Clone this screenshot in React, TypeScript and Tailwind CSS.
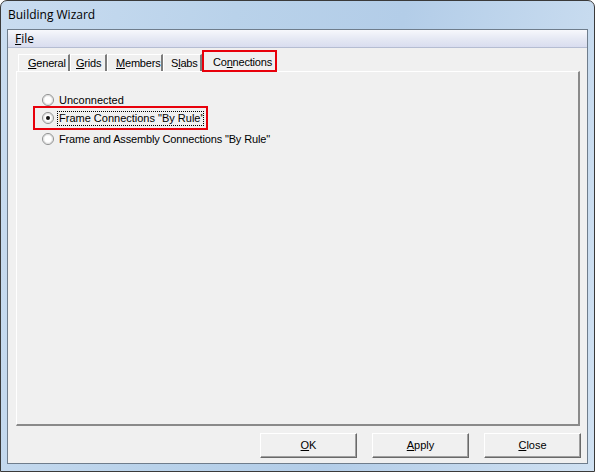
import React from "react";

const ui = { fontFamily: '"Liberation Sans", Arial, sans-serif' };
const seg = { fontFamily: '"Open Sans", "Noto Sans", sans-serif' };

function U({ children }: { children: React.ReactNode }) {
  return <span className="underline underline-offset-[1px] decoration-[1px]">{children}</span>;
}

function Radio({ checked }: { checked?: boolean }) {
  return (
    <svg width="12" height="12" viewBox="0 0 12 12" className="shrink-0">
      <circle cx="6" cy="6" r="5.5" fill="#f4f4f4" stroke="#8e8f8f" />
      <circle cx="6" cy="6" r="4.3" fill="#ffffff" stroke="#d6d6d6" strokeWidth="0.8" />
      {checked && <circle cx="6" cy="6" r="2" fill="#111" />}
    </svg>
  );
}

function Tab({
  children,
  w,
  pl,
  selected,
}: {
  children: React.ReactNode;
  w: string;
  pl: string;
  selected?: boolean;
}) {
  return (
    <div
      className={`${w} ${pl} flex items-center justify-start border-l border-t border-l-white border-t-white border-r-2 border-r-[#7c7c7c] ${
        selected ? "h-[21px] relative z-10 bg-[#f0f0f0]" : "h-[18px]"
      }`}
    >
      <span className="text-[11px] text-black leading-none whitespace-nowrap tracking-[-0.2px]" style={ui}>
        {children}
      </span>
    </div>
  );
}

function Btn({ children }: { children: React.ReactNode }) {
  return (
    <div className="w-[97px] h-[25px] flex items-center justify-center bg-[#f0f0f0] border border-t-white border-l-white border-r-[#696969] border-b-[#696969] shadow-[inset_-1px_-1px_0_#a0a0a0]">
      <span className="text-[11px] text-black" style={ui}>
        {children}
      </span>
    </div>
  );
}

export default function App() {
  return (
    <div className="w-[595px] h-[472px] bg-white">
      <div className="w-[595px] h-[472px] border border-[#3a3a3a] rounded-t-[7px] bg-[linear-gradient(100deg,#c9dcf0_0%,#b9d2ea_35%,#b3cde8_60%,#d0e1f2_100%)] flex flex-col">
        {/* caption */}
        <div className="h-[28px] flex items-center pl-[7px]">
          <span className="text-[12px] text-black" style={seg}>
            Building Wizard
          </span>
        </div>
        {/* client area */}
        <div className="mx-[6px] h-[435px] border border-[#6f7d8c] bg-[#f0f0f0] flex flex-col">
          <div className="h-[18px] bg-[linear-gradient(#f7f8fc,#e6e9f4_50%,#d9ddef)] border-b border-[#b5bdd2] flex items-center pl-[7px]">
            <span className="text-[12px] text-black leading-none" style={seg}>
              <U>F</U>ile
            </span>
          </div>
          {/* tab strip */}
          <div className="flex items-end pl-[10px] mt-[3px] h-[21px]">
            <Tab w="w-[52px]" pl="pl-[9px]">
              <U>G</U>eneral
            </Tab>
            <Tab w="w-[37px]" pl="pl-[5px]">
              <U>G</U>rids
            </Tab>
            <Tab w="w-[56px]" pl="pl-[8px]">
              <U>M</U>embers
            </Tab>
            <Tab w="w-[39px]" pl="pl-[7px]">
              S<U>l</U>abs
            </Tab>
            <div className="relative">
              <Tab w="w-[75px]" pl="pl-[10px]" selected>
                Co<U>n</U>nections
              </Tab>
              <div className="absolute left-0 top-[-1px] w-[75px] h-[22px] border-2 border-[#e8000b] z-20" />
            </div>
          </div>
          {/* tab page */}
          <div className="ml-[8px] mr-[7px] -mt-[1px] h-[355px] border-l border-t border-white border-r-2 border-b-2 border-r-[#8a8a8a] border-b-[#8a8a8a] flex flex-col pl-[25px] pt-[20px]">
            <div className="flex items-center gap-[5px] h-[16px]">
              <Radio />
              <span className="text-[11px] text-black" style={ui}>
                Unconnected
              </span>
            </div>
            <div className="relative flex items-center gap-[5px] h-[16px] mt-[2px]">
              <Radio checked />
              <span
                className="text-[11px] text-black leading-[13px] outline outline-1 outline-dotted outline-black px-[1px] -ml-[1px] w-[145px] overflow-hidden whitespace-nowrap"
                style={ui}
              >
                Frame Connections "By Rule"
              </span>
              <div className="absolute left-[-9px] top-[-4px] w-[175px] h-[24px] border-2 border-[#e8000b]" />
            </div>
            <div className="flex items-center gap-[5px] h-[16px] mt-[5px]">
              <Radio />
              <span className="text-[11px] text-black tracking-[-0.15px]" style={ui}>
                Frame and Assembly Connections "By Rule"
              </span>
            </div>
          </div>
          {/* buttons */}
          <div className="flex justify-end gap-[15px] mt-[7px] pr-[6px]">
            <Btn>
              <U>O</U>K
            </Btn>
            <Btn>
              <U>A</U>pply
            </Btn>
            <Btn>
              <U>C</U>lose
            </Btn>
          </div>
        </div>
      </div>
    </div>
  );
}
